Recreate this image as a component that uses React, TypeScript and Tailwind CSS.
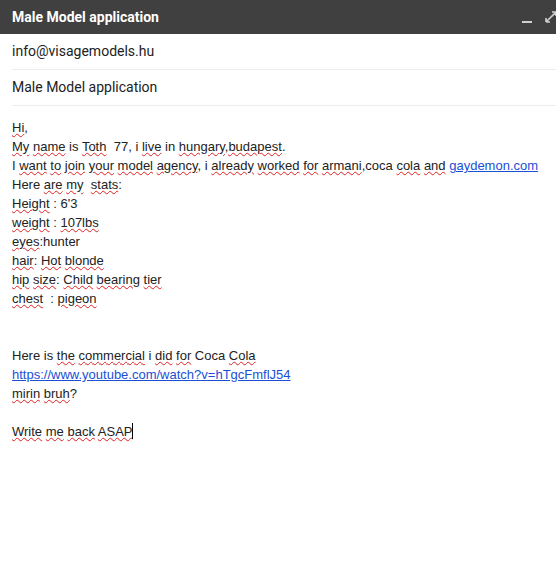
import React from "react";

const lines = [
  "{Hi},",
  "{My} {name} is {Toth}  77, i {live} in {hungary,budapest}.",
  "I {want} {to} {join} {your} {model} {agency}, i {already} {worked} {for} {armani},coca {cola} {and} [gaydemon.com]",
  "Here {are} {my}  {stats}:",
  "{Height} : 6'3",
  "{weight} : {107lbs}",
  "{eyes}:hunter",
  "{hair}: {Hot} {blonde}",
  "{hip} {size}: {Child} {bearing} {tier}",
  "{chest}  : {pigeon}",
  "",
  "",
  "Here is {the} {commercial} i {did} {for} Coca {Cola}",
  "[https://www.youtube.com/watch?v=hTgcFmflJ54]",
  "{mirin} {bruh}?",
  "",
  "{Write} {me} {back} {ASAP}|",
];

function Line({ text }: { text: string }) {
  const parts = text.split(/(\{[^}]+\}|\[[^\]]+\]|\|)/).filter((p) => p !== "");
  return (
    <div className="h-[19px] whitespace-pre">
      {parts.map((p, i) => {
        if (p.startsWith("{"))
          return (
            <span key={i} className="underline decoration-wavy decoration-[#e02020] decoration-1 underline-offset-[1px]">
              {p.slice(1, -1)}
            </span>
          );
        if (p.startsWith("["))
          return (
            <span key={i} className="text-[#1a4fd6] underline decoration-[#1a4fd6] underline-offset-1">
              {p.slice(1, -1)}
            </span>
          );
        if (p === "|")
          return <span key={i} className="inline-block w-px h-[16px] bg-black align-[-3px]" />;
        return <span key={i}>{p}</span>;
      })}
      {text === "" && "\u00a0"}
    </div>
  );
}

export default function App() {
  return (
    <div className="w-[556px] h-[567px] bg-white overflow-hidden font-['Roboto',sans-serif]">
      <div className="h-[34px] bg-[#404040] flex items-center justify-between pl-3">
        <span className="text-white font-bold text-[14px]">Male Model application</span>
        <div className="flex items-center gap-3 pr-0">
          <svg width="10" height="10" viewBox="0 0 10 10" className="mt-1">
            <rect x="0" y="7" width="10" height="2" fill="#cfcfcf" />
          </svg>
          <svg width="12" height="14" viewBox="0 0 12 14">
            <path d="M2 12 L12 2 M2 12 v-4 M2 12 h4 M12 2 h-4 M12 2 v4" stroke="#cfcfcf" strokeWidth="1.6" fill="none" />
          </svg>
        </div>
      </div>
      <div className="pl-3">
        <div className="h-9 flex items-center border-b border-[#ececec] text-[14px] text-[#222]">
          info@visagemodels.hu
        </div>
        <div className="h-9 flex items-center border-b border-[#ececec] text-[14px] text-[#222]">
          Male Model application
        </div>
      </div>
      <div className="pl-3 pt-[12px] text-[13px] leading-[19px] text-[#222] font-['Liberation_Sans',Arial,sans-serif]">
        {lines.map((l, i) => (
          <Line key={i} text={l} />
        ))}
      </div>
    </div>
  );
}
